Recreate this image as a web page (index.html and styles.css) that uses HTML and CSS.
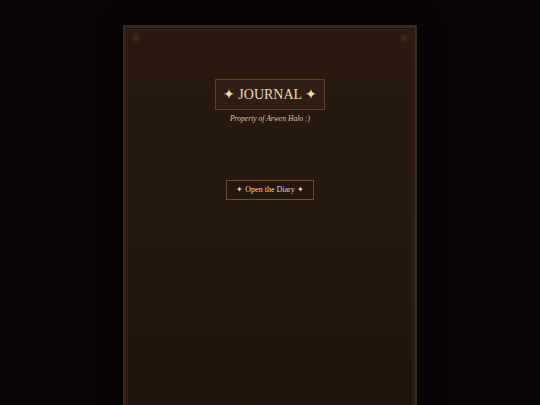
FILE: index.html
```html
<!DOCTYPE html>
<html>
<head>
<meta charset="utf-8">
<link rel="stylesheet" href="styles.css">
</head>
<body>
<div class="stage">
  <div class="book">
    <span class="stud stud-left"></span>
    <span class="stud stud-right"></span>
    <div class="cover">
      <div class="title">✦ JOURNAL ✦</div>
      <div class="owner">Property of Arwen Halo :)</div>
      <button class="open">✦ Open the Diary ✦</button>
    </div>
  </div>
</div>
</body>
</html>
```
FILE: styles.css
```css
html, body {
  margin: 0;
  padding: 0;
  background: #080504;
  height: 100%;
  overflow: hidden;
}
.stage {
  display: flex;
  justify-content: center;
  padding-top: 25px;
}
.book {
  position: relative;
  width: 288px;
  height: 420px;
  border: 3px solid #3a271b;
  background: linear-gradient(180deg, #2a1a10 0%, #24170e 50%, #1d120b 100%);
  box-shadow: inset 0 0 0 1px #1e130b, inset 0 0 0 2px #33221a, 0 0 20px rgba(0,0,0,0.6);
  font-family: "Liberation Serif", "DejaVu Serif", serif;
}
.stud {
  position: absolute;
  top: 5px;
  width: 10px;
  height: 10px;
  border-radius: 50%;
  background: radial-gradient(circle, rgba(90,65,45,0.55) 0%, rgba(90,65,45,0) 70%);
}
.stud-left { left: 5px; }
.stud-right { right: 5px; }
.cover {
  display: flex;
  flex-direction: column;
  align-items: center;
  padding-top: 51px;
}
.title {
  color: #ecd9b6;
  font-size: 14px;
  line-height: 17px;
  padding: 6px 7px;
  border: 1px solid #5a3f2b;
  background: #2e1e13;
}
.owner {
  margin-top: 4px;
  color: #d7c4a6;
  font-size: 7.6px;
  font-style: italic;
  line-height: 9px;
}
.open {
  margin-top: 57px;
  font-family: "Liberation Serif", "DejaVu Serif", serif;
  font-size: 8px;
  line-height: 10px;
  color: #e6d4b4;
  background: #24170e;
  border: 1px solid #6a4c33;
  padding: 4px 9px;
  cursor: pointer;
}
```
